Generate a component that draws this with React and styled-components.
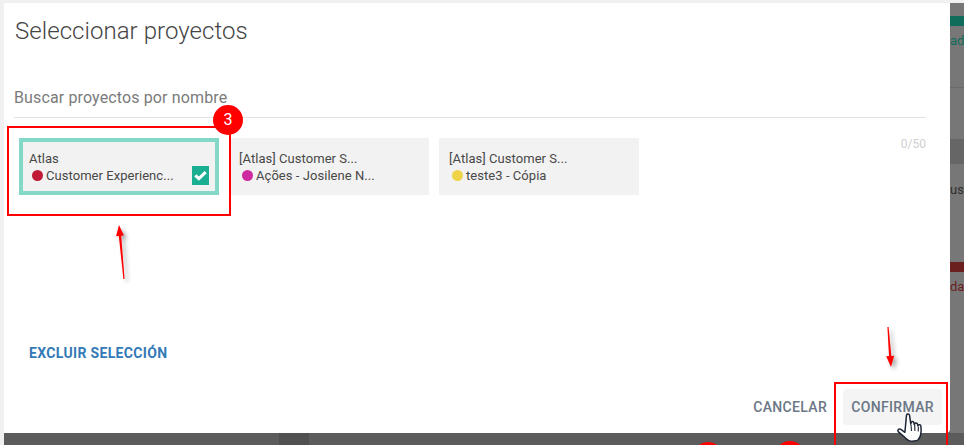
import React from 'react'
import styled, { createGlobalStyle } from 'styled-components'

const GlobalStyle = createGlobalStyle`
  html, body {
    margin: 0;
    padding: 0;
    background: #f0f0f0;
  }
  * {
    box-sizing: border-box;
  }
`

const Screen = styled.div`
  position: relative;
  width: 964px;
  height: 445px;
  overflow: hidden;
  padding: 3px 0 0 4px;
  background: #f0f0f0;
  font-family: Roboto, 'Liberation Sans', sans-serif;
`

const Backdrop = styled.div`
  display: grid;
  grid-template-columns: 946px 14px;
  grid-template-rows: 430px 12px;
  height: 442px;
  background: #5c5c5c;
`

const Modal = styled.div`
  display: flex;
  flex-direction: column;
  padding: 0 8px 8px 10px;
  background: #fff;
  border-radius: 0 0 4px 0;
`

const Title = styled.h2`
  margin: 0;
  padding: 14px 0 0 1px;
  height: 47px;
  font-size: 24px;
  line-height: 28px;
  font-weight: 300;
  letter-spacing: 0.05px;
  color: #444;
`

const Search = styled.div`
  width: 912px;
  margin-top: 35px;
  height: 33px;
  line-height: 25px;
  font-size: 16px;
  letter-spacing: 0.13px;
  color: #7b7b7b;
  border-bottom: 1px solid #e2e2e2;
`

const CardsRow = styled.div`
  display: flex;
  gap: 10px;
  width: 912px;
  margin-top: 20px;
  padding-left: 5px;
`

const Counter = styled.span`
  margin-left: auto;
  font-size: 12px;
  line-height: 12px;
  color: #cfcfcf;
`

const Card = styled.div`
  position: relative;
  display: flex;
  flex-direction: column;
  justify-content: center;
  gap: 4px;
  width: 200px;
  height: 57px;
  padding-left: ${p => (p.$selected ? '6px' : '10px')};
  background: #f2f2f2;
  border: ${p => (p.$selected ? '4px solid #84d8c8' : 'none')};
  font-size: 13px;
  line-height: 13px;
  letter-spacing: 0.05px;
  color: #484848;
`

const CardName = styled.div`
  white-space: nowrap;
`

const CardSub = styled.div`
  display: flex;
  align-items: center;
  gap: 3px;
  padding-left: 3px;
  white-space: nowrap;
`

const Dot = styled.span`
  width: 11px;
  height: 11px;
  border-radius: 50%;
  background: ${p => p.$color};
`

const CheckBox = styled.span`
  position: absolute;
  right: 6px;
  bottom: 6px;
  display: flex;
  align-items: center;
  justify-content: center;
  width: 17px;
  height: 19px;
  background: #1aae92;
`

const ExcludeLink = styled.a`
  margin: auto 0 0 15px;
  font-size: 14px;
  line-height: 16px;
  font-weight: 700;
  letter-spacing: 0.33px;
  color: #337ab7;
`

const Footer = styled.div`
  display: flex;
  justify-content: flex-end;
  align-items: center;
  gap: 8px;
  margin-top: 28px;
`

const FooterButton = styled.button`
  height: 36px;
  padding: 0 8px 1px;
  border: 0;
  border-radius: 4px;
  background: ${p => (p.$active ? '#f4f4f4' : 'transparent')};
  font-family: inherit;
  font-size: 14px;
  font-weight: 500;
  letter-spacing: 0.35px;
  color: #6b7785;
`

const SideStrip = styled.div`
  display: flex;
  flex-direction: column;
  overflow: hidden;
  background: #777;
`

const Band = styled.div`
  height: ${p => p.$h}px;
  flex: none;
  background: ${p => p.$bg || 'transparent'};
  font-size: 13px;
  line-height: ${p => p.$h}px;
  white-space: nowrap;
  color: ${p => p.$color || 'inherit'};
  border-bottom: ${p => (p.$rule ? '1px solid #6a6a6a' : 'none')};
`

const BottomStrip = styled.div`
  display: flex;
  padding-left: 275px;
`

const BottomBlock = styled.div`
  width: 30px;
  height: 100%;
  background: #505050;
`

const Outline = styled.div`
  position: absolute;
  left: ${p => p.$x}px;
  top: ${p => p.$y}px;
  width: ${p => p.$w}px;
  height: ${p => p.$h}px;
  border: 2px solid #f00;
`

const Badge = styled.div`
  position: absolute;
  left: ${p => p.$x}px;
  top: ${p => p.$y}px;
  width: 30px;
  height: 30px;
  border-radius: 50%;
  background: #f00;
  color: #fff;
  font-size: 16px;
  line-height: 30px;
  text-align: center;
`

const Overlay = styled.svg`
  position: absolute;
  left: ${p => p.$x}px;
  top: ${p => p.$y}px;
  overflow: visible;
`

const projects = [
  { name: 'Atlas', sub: 'Customer Experienc...', color: '#c01a36', selected: true },
  { name: '[Atlas] Customer S...', sub: 'Ações - Josilene N...', color: '#cc2a9e' },
  { name: '[Atlas] Customer S...', sub: 'teste3 - Cópia', color: '#efd348' }
]

// x1,y1 is the tail of the arrow and x2,y2 its tip
const Arrow = ({ x1, y1, x2, y2 }) => {
  const angle = Math.atan2(y2 - y1, x2 - x1)
  const back = 11
  const wide = 4
  const bx = x2 - back * Math.cos(angle)
  const by = y2 - back * Math.sin(angle)
  const nx = -Math.sin(angle) * wide
  const ny = Math.cos(angle) * wide
  return (
    <g style={{ filter: 'drop-shadow(3px 3px 2px rgba(0,0,0,0.35))' }}>
      <polygon
        points={`${x1 - nx * 0.15},${y1 - ny * 0.15} ${x1 + nx * 0.15},${y1 + ny * 0.15} ${bx + nx * 0.3},${by + ny * 0.3} ${bx + nx},${by + ny} ${x2},${y2} ${bx - nx},${by - ny} ${bx - nx * 0.3},${by - ny * 0.3}`}
        fill="#f00"
      />
    </g>
  )
}

const HandCursor = () => (
  <Overlay $x={897} $y={413} width="27" height="30" viewBox="0 0 27 30">
    <path
      d="M9.5 2.2c0-1.6 2.7-1.8 3 0l1.3 9 .3-1.6c.3-1.4 2.5-1.3 2.8.2l.4 1.9.4-1c.5-1.2 2.4-1 2.8.4l.3 1.6.5-.6c.7-.8 2.4-.5 2.6.9.4 3 .4 6.4-.4 9.2-.5 1.8-1.3 3.2-2.3 4.6-1.3 1.2-6.5 2-9.3.8-2.4-1-3.9-2.7-5.6-4.6L1.2 18.6c-1.1-1.4.6-3.3 2.3-2.4l4.4 3.1L9.5 2.2Z"
      fill="#fff"
      stroke="#1d2433"
      strokeWidth="1.5"
      strokeLinejoin="round"
    />
    <path d="M14 12l.5 6M17.7 12l.2 6M21.4 13.5l-.2 5" stroke="#1d2433" strokeWidth="1.1" fill="none" />
  </Overlay>
)

const App = () => (
  <Screen>
    <GlobalStyle />
    <Backdrop>
      <Modal>
        <Title>Seleccionar proyectos</Title>
        <Search>Buscar proyectos por nombre</Search>
        <CardsRow>
          {projects.map(project => (
            <Card key={project.sub} $selected={project.selected}>
              <CardName>{project.name}</CardName>
              <CardSub>
                <Dot $color={project.color} />
                {project.sub}
              </CardSub>
              {project.selected && (
                <CheckBox>
                  <svg width="13" height="11" viewBox="0 0 13 11">
                    <path d="M1.3 5.3l3.6 3.4 6.8-6.6" fill="none" stroke="#fff" strokeWidth="3" />
                  </svg>
                </CheckBox>
              )}
            </Card>
          ))}
          <Counter>0/50</Counter>
        </CardsRow>
        <ExcludeLink>EXCLUIR SELECCIÓN</ExcludeLink>
        <Footer>
          <FooterButton>CANCELAR</FooterButton>
          <FooterButton $active>CONFIRMAR</FooterButton>
        </Footer>
      </Modal>
      <SideStrip>
        <Band $h={13} />
        <Band $h={10} $bg="#0f6b5a" />
        <Band $h={29} $color="#0f6b5a">ad</Band>
        <Band $h={33} $rule />
        <Band $h={51} />
        <Band $h={25} $bg="#666" />
        <Band $h={52} $color="#2e2e2e">ust</Band>
        <Band $h={46} />
        <Band $h={10} $bg="#6b2020" />
        <Band $h={30} $color="#6b2020">da</Band>
      </SideStrip>
      <BottomStrip>
        <BottomBlock />
      </BottomStrip>
      <div />
    </Backdrop>

    <Outline $x={7} $y={126} $w={224} $h={90} />
    <Outline $x={834} $y={382} $w={114} $h={90} />
    <Badge $x={213} $y={105}>3</Badge>
    <Badge $x={693} $y={442} />
    <Badge $x={775} $y={441} />
    <Overlay $x={0} $y={0} width="964" height="445">
      <Arrow x1={124} y1={279} x2={119} y2={225} />
      <Arrow x1={888} y1={327} x2={891} y2={367} />
    </Overlay>
    <HandCursor />
  </Screen>
)

export default App
